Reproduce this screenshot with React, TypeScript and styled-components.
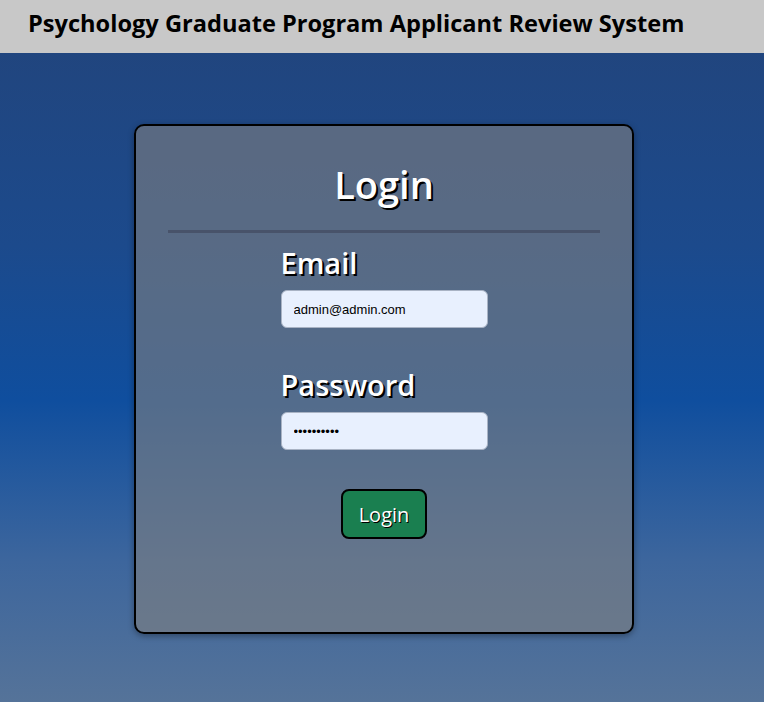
import React from "react";
import styled, { createGlobalStyle } from "styled-components";

const GlobalStyle = createGlobalStyle`
  html, body { margin: 0; padding: 0; height: 100%; }
  body { font-family: "Open Sans", "Noto Sans", sans-serif; }
  #root { min-height: 100%; }
`;

const Page = styled.div`
  display: flex;
  flex-direction: column;
  min-height: 702px;
  background: linear-gradient(to bottom, #22447b 0%, #1c4a8c 35%, #0f4e9e 57%, #3d669d 80%, #557399 100%);
`;

const Header = styled.header`
  height: 53px;
  box-sizing: border-box;
  background: #c8c8c8;
  padding: 8px 0 0 28px;
  font-size: 23.6px;
  font-weight: 700;
  color: #000;
  line-height: 30px;
`;

const Main = styled.main`
  display: flex;
  justify-content: center;
  padding: 71px 0 0 4px;
`;

const Card = styled.section`
  width: 500px;
  height: 510px;
  box-sizing: border-box;
  border: 2px solid #000;
  border-radius: 10px;
  background: rgba(128, 128, 128, 0.6);
  box-shadow: 0 2px 6px rgba(0, 0, 0, 0.35);
  display: flex;
  flex-direction: column;
  align-items: center;
  padding: 36px 32px 0;
`;

const Title = styled.h1`
  margin: 0;
  font-size: 38px;
  font-weight: 600;
  line-height: 44px;
  color: #fff;
  text-shadow: 2px 2px 0 #000;
`;

const Divider = styled.hr`
  align-self: stretch;
  margin: 24px 0 0;
  border: none;
  height: 3px;
  background: #48536a;
`;

const Form = styled.form`
  width: 207px;
  display: flex;
  flex-direction: column;
  margin-top: 12px;
`;

const Label = styled.label<{ $gap?: number }>`
  margin-top: ${(p) => p.$gap ?? 0}px;
  font-size: 29px;
  font-weight: 600;
  line-height: 35px;
  color: #fff;
  text-shadow: 2px 2px 0 #000;
`;

const Input = styled.input`
  margin-top: 10px;
  height: 38px;
  box-sizing: border-box;
  width: 100%;
  padding: 0 12px;
  border: 1px solid #a9b3c4;
  border-radius: 6px;
  background: #e8f0fe;
  font-family: "Liberation Sans", Arial, sans-serif;
  font-size: 13px;
  color: #000;
  outline: none;
`;

const Button = styled.button`
  align-self: center;
  margin-top: 39px;
  width: 86px;
  height: 50px;
  box-sizing: border-box;
  border: 2px solid #000;
  border-radius: 8px;
  background: #1a7f50;
  color: #fff;
  font-family: "Open Sans", "Noto Sans", sans-serif;
  font-size: 20px;
  text-shadow: 1px 1px 0 #000;
  cursor: pointer;
`;

export default function App() {
  return (
    <>
      <GlobalStyle />
      <Page>
        <Header>Psychology Graduate Program Applicant Review System</Header>
        <Main>
          <Card>
            <Title>Login</Title>
            <Divider />
            <Form onSubmit={(e) => e.preventDefault()}>
              <Label htmlFor="email">Email</Label>
              <Input id="email" type="email" defaultValue="admin@admin.com" />
              <Label htmlFor="password" $gap={39}>Password</Label>
              <Input id="password" type="password" defaultValue="password12" />
              <Button type="submit">Login</Button>
            </Form>
          </Card>
        </Main>
      </Page>
    </>
  );
}
